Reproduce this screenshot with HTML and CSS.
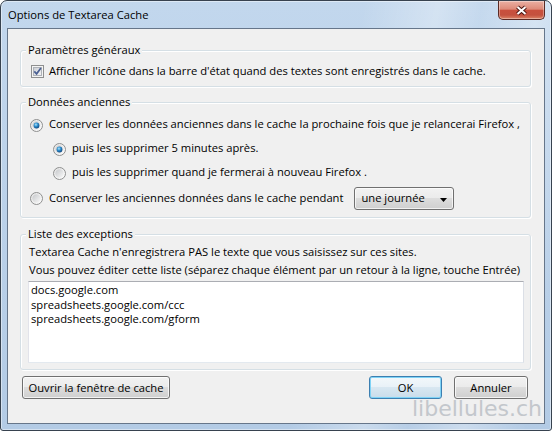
FILE: index.html
```html
<!DOCTYPE html>
<html lang="fr">
<head>
<meta charset="utf-8">
<title>Options de Textarea Cache</title>
<link rel="stylesheet" href="styles.css">
</head>
<body>
<svg class="defs" width="0" height="0" aria-hidden="true">
  <defs>
    <linearGradient id="cbInner" x1="0" y1="0" x2="1" y2="1">
      <stop offset="0" stop-color="#c9cdd3"/>
      <stop offset="1" stop-color="#f7f7f7"/>
    </linearGradient>
    <linearGradient id="rOuter" x1="0" y1="0" x2="1" y2="1">
      <stop offset="0" stop-color="#e2e2e2"/>
      <stop offset="1" stop-color="#ffffff"/>
    </linearGradient>
    <linearGradient id="rInner" x1="0" y1="0" x2="1" y2="1">
      <stop offset="0" stop-color="#c6c8cb"/>
      <stop offset="1" stop-color="#f9f9f9"/>
    </linearGradient>
    <radialGradient id="rDot" cx="0.4" cy="0.35" r="0.7">
      <stop offset="0" stop-color="#b2e6fb"/>
      <stop offset="0.45" stop-color="#2f8fcd"/>
      <stop offset="1" stop-color="#0b3f78"/>
    </radialGradient>
  </defs>
</svg>
<div class="window">
  <div class="titlebar">
    <span class="title">Options de Textarea Cache</span>
    <button class="close" aria-label="Fermer">
      <svg width="13" height="11" viewBox="0 0 13 11">
        <path d="M2.5 2 L10.5 9 M10.5 2 L2.5 9" stroke="#4a1712" stroke-width="4" fill="none"/>
        <path d="M2.5 2 L10.5 9 M10.5 2 L2.5 9" stroke="#ffffff" stroke-width="2" fill="none"/>
      </svg>
    </button>
  </div>
  <div class="client">
    <fieldset class="group g1">
      <legend>Paramètres généraux</legend>
      <div class="check-row">
        <svg class="checkbox" width="13" height="13" viewBox="0 0 13 13">
          <rect x="0.5" y="0.5" width="12" height="12" fill="#f4f4f4" stroke="#8e8f8f"/>
          <rect x="2.5" y="2.5" width="8" height="8" fill="url(#cbInner)" stroke="#aeb2b8"/>
          <path d="M3.3 6.3 L5.6 8.8 L9.9 3.1" fill="none" stroke="#4a5f93" stroke-width="1.7"/>
        </svg>
        <span class="label">Afficher l'icône dans la barre d'état quand des textes sont enregistrés dans le cache.</span>
      </div>
    </fieldset>

    <fieldset class="group g2">
      <legend>Données anciennes</legend>
      <div class="options">
        <div class="opt">
          <svg class="radio" width="13" height="13" viewBox="0 0 13 13">
            <circle cx="6.5" cy="6.5" r="6" fill="url(#rOuter)" stroke="#8e8f8f"/>
            <circle cx="6.5" cy="6.5" r="4.2" fill="url(#rInner)"/>
            <circle cx="6.5" cy="6.5" r="2.9" fill="url(#rDot)"/>
          </svg>
          <span class="label">Conserver les données anciennes dans le cache la prochaine fois que je relancerai Firefox ,</span>
        </div>
        <div class="opt sub">
          <svg class="radio" width="13" height="13" viewBox="0 0 13 13">
            <circle cx="6.5" cy="6.5" r="6" fill="url(#rOuter)" stroke="#8e8f8f"/>
            <circle cx="6.5" cy="6.5" r="4.2" fill="url(#rInner)"/>
            <circle cx="6.5" cy="6.5" r="2.9" fill="url(#rDot)"/>
          </svg>
          <span class="label">puis les supprimer 5 minutes après.</span>
        </div>
        <div class="opt sub">
          <svg class="radio" width="13" height="13" viewBox="0 0 13 13">
            <circle cx="6.5" cy="6.5" r="6" fill="url(#rOuter)" stroke="#8e8f8f"/>
            <circle cx="6.5" cy="6.5" r="4.2" fill="url(#rInner)"/>
          </svg>
          <span class="label">puis les supprimer quand je fermerai à nouveau Firefox .</span>
        </div>
        <div class="opt last">
          <svg class="radio" width="13" height="13" viewBox="0 0 13 13">
            <circle cx="6.5" cy="6.5" r="6" fill="url(#rOuter)" stroke="#8e8f8f"/>
            <circle cx="6.5" cy="6.5" r="4.2" fill="url(#rInner)"/>
          </svg>
          <span class="label">Conserver les anciennes données dans le cache pendant</span>
          <div class="combo">
            <span>une journée</span>
            <svg class="arrow" width="7" height="4" viewBox="0 0 7 4"><polygon points="0,0 7,0 3.5,4" fill="#000"/></svg>
          </div>
        </div>
      </div>
    </fieldset>

    <fieldset class="group g3">
      <legend>Liste des exceptions</legend>
      <p class="note">Textarea Cache n'enregistrera PAS le texte que vous saisissez sur ces sites.</p>
      <p class="note">Vous pouvez éditer cette liste (séparez chaque élément par un retour à la ligne, touche Entrée)</p>
      <textarea class="list" spellcheck="false">docs.google.com
spreadsheets.google.com/ccc
spreadsheets.google.com/gform</textarea>
    </fieldset>

    <div class="actions">
      <button class="btn open">Ouvrir la fenêtre de cache</button>
      <button class="btn ok">OK</button>
      <button class="btn cancel">Annuler</button>
    </div>
  </div>
  <div class="watermark">libellules.ch</div>
</div>
</body>
</html>
```

FILE: styles.css
```css
* { box-sizing: border-box; }

html, body {
  margin: 0;
  padding: 0;
  background: #ffffff;
}

body {
  font-family: "Open Sans", "Noto Sans", sans-serif;
  font-size: 11.2px;
  line-height: 15px;
  color: #000;
}

.defs {
  display: block;
  width: 0;
  height: 0;
}

.window {
  position: relative;
  width: 552px;
  height: 431px;
  border: 1px solid #37424f;
  border-radius: 7px 7px 3px 3px;
  background:
    linear-gradient(100deg, rgba(255,255,255,0) 0%, rgba(255,255,255,0) 58%, rgba(255,255,255,.30) 70%, rgba(255,255,255,.06) 77%, rgba(255,255,255,.32) 86%, rgba(255,255,255,0) 96%),
    linear-gradient(#c2d7ed, #b3cbe5);
  box-shadow: inset 0 0 0 1px rgba(255,255,255,.45);
  display: flex;
  flex-direction: column;
  overflow: hidden;
}

.titlebar {
  height: 27px;
  display: flex;
  align-items: flex-start;
  flex: none;
}

.title {
  margin: 6px 0 0 7px;
  line-height: 15px;
}

.close {
  margin: 0 6px 0 auto;
  width: 47px;
  height: 19px;
  padding: 0;
  border: 1px solid #5a2a24;
  border-top: none;
  border-radius: 0 0 5px 5px;
  background: linear-gradient(#eab0a3 0%, #dd8a79 45%, #c9503d 52%, #c4513e 78%, #dc8466 100%);
  box-shadow: inset 0 0 0 1px rgba(255,255,255,.35);
  display: flex;
  align-items: center;
  justify-content: center;
}

.close svg { display: block; }

.client {
  flex: 1;
  margin: 0 6px 6px 6px;
  border: 1px solid #66768a;
  background: #f0f0f0;
  padding: 13px 13px 0 12px;
  display: flex;
  flex-direction: column;
}

.group {
  margin: 0;
  padding: 0;
  min-width: 0;
  border: 1px solid #d5dfe5;
  border-radius: 3px;
  box-shadow: inset 1px 1px 0 #ffffff, 1px 1px 0 #ffffff;
}

.group legend {
  margin-left: 5px;
  padding: 0 2px 2px 2px;
  line-height: 15px;
  background: #f0f0f0;
}

.g2 { margin-top: 7px; }
.g3 { margin-top: 8px; }

.check-row {
  display: flex;
  align-items: flex-start;
  height: 15px;
  margin: 4px 0 8px 10px;
}

.checkbox {
  display: block;
  flex: none;
  margin: 2px 5px 0 0;
}

.label { white-space: nowrap; }

.options {
  padding: 2px 0 7px 9px;
}

.opt {
  display: flex;
  align-items: flex-start;
  height: 24px;
}

.opt .radio {
  display: block;
  flex: none;
  margin: 6px 6px 0 0;
}

.opt .label { margin-top: 3px; }

.opt.sub { padding-left: 23px; }

.opt.last {
  height: 23px;
  margin-top: 2px;
}

.opt.last .radio { margin-top: 5px; }

.combo {
  margin-left: 11px;
  width: 100px;
  height: 23px;
  border: 1px solid #707070;
  border-radius: 3px;
  background: linear-gradient(#f2f2f2 0%, #ebebeb 50%, #dddddd 50%, #cfcfcf 100%);
  box-shadow: inset 0 0 0 1px rgba(255,255,255,.7);
  display: flex;
  align-items: flex-start;
  justify-content: space-between;
  padding: 2px 6px 0 6px;
}

.combo .arrow {
  display: block;
  margin-top: 8px;
}

.note {
  margin: 0;
  padding-left: 8px;
  line-height: 18px;
  white-space: nowrap;
}

.list {
  display: block;
  margin: 2px 6px 6px 7px;
  width: 496px;
  height: 82px;
  padding: 1px 2px;
  border: 1px solid;
  border-color: #abadb3 #dbdfe6 #e3e9ef #e2e3ea;
  background: #fff;
  font: inherit;
  line-height: 14.5px;
  color: #000;
  resize: none;
  overflow: hidden;
  outline: none;
}

.actions {
  display: flex;
  margin-top: 6px;
  padding: 0 3px 0 2px;
}

.btn {
  height: 23px;
  padding: 0;
  border: 1px solid #707070;
  border-radius: 3px;
  background: linear-gradient(#f2f2f2 0%, #ebebeb 50%, #dddddd 50%, #cfcfcf 100%);
  box-shadow: inset 0 0 0 1px rgba(255,255,255,.75);
  font: inherit;
  line-height: 15px;
  color: #000;
  text-align: center;
}

.btn.open { width: 148px; }

.btn.ok {
  width: 73px;
  margin-left: auto;
  border-color: #3c7fb1;
  box-shadow: inset 0 0 0 1px #7fd3f6;
  background: linear-gradient(#f3f8fb 0%, #e8f1f7 50%, #d8e7f1 50%, #c9dcea 100%);
}

.btn.cancel {
  width: 74px;
  margin-left: 12px;
}

.watermark {
  position: absolute;
  left: 411px;
  top: 397px;
  font-family: "DejaVu Sans", sans-serif;
  font-size: 22px;
  line-height: 22px;
  color: #c3c7cc;
  white-space: nowrap;
}
```
